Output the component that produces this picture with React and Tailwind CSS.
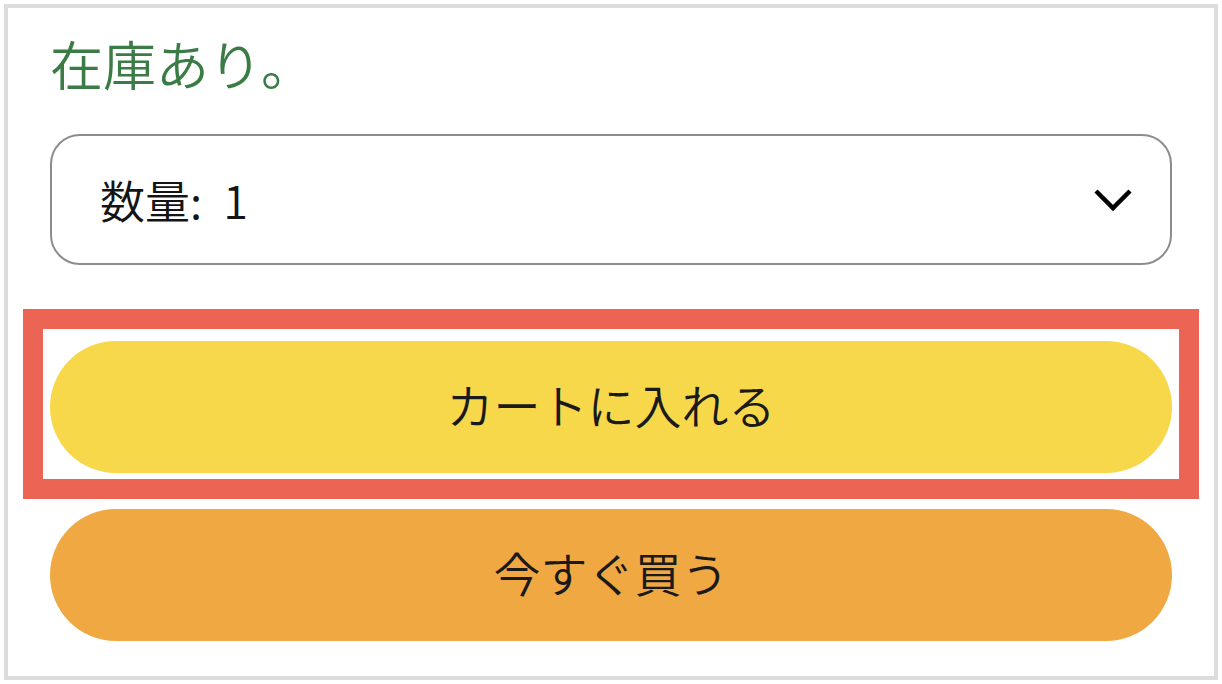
export default function App() {
  const jp = { fontFamily: '"Noto Sans CJK JP", "Noto Sans", sans-serif' };
  return (
    <div className="w-[1222px] h-[684px] bg-white p-[4px] font-[350]" style={jp}>
      <div className="h-full border-4 border-[#dcdcdc] px-[42px] flex flex-col">
        <div className="mt-[19px] h-[72px] leading-[72px] text-[53px] text-[#3b7b46]">在庫あり。</div>
        <div className="mt-[35px] h-[131px] shrink-0 rounded-[30px] border-2 border-[#8c8c8c] flex items-center justify-between pl-[48px] pr-[37px]">
          <span className="text-[45px] text-[#141414] leading-none">
            数量: <span className="ml-[11px]">1</span>
          </span>
          <svg width="40" height="26" viewBox="0 0 40 26" fill="none">
            <polyline points="3,4 20,21 37,4" stroke="#000" strokeWidth="4.5" />
          </svg>
        </div>
        <div className="mt-[44px] mx-[-27px] border-[20px] border-[#ec6453] px-[7px] pt-[12px] pb-[6px]">
          <button className="w-full h-[132px] rounded-full bg-[#f7d84b] text-[47px] text-[#1a1a1a] flex items-center justify-center pb-[6px]">
            カートに入れる
          </button>
        </div>
        <button className="mt-[10px] w-full h-[132px] shrink-0 rounded-full bg-[#f0a842] text-[47px] text-[#1a1a1a] flex items-center justify-center pb-[6px]">
          今すぐ買う
        </button>
      </div>
    </div>
  );
}
